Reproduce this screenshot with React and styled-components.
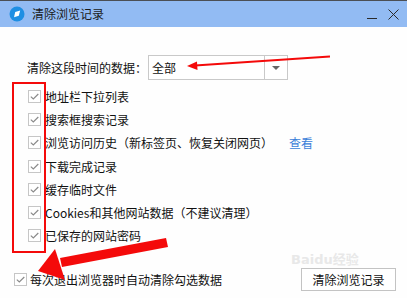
import styled, { createGlobalStyle } from "styled-components";

const GlobalStyle = createGlobalStyle`
  html, body {
    margin: 0;
    padding: 0;
    background: #fff;
  }
  body {
    font-family: "Noto Sans CJK SC", "DejaVu Sans", sans-serif;
    font-size: 12px;
    color: #111;
  }
`;

const Window = styled.div`
  position: relative;
  width: 407px;
  height: 298px;
  background: #fefefe;
  overflow: hidden;
`;

const TitleBar = styled.div`
  display: flex;
  align-items: center;
  height: 26px;
  border-top: 1px solid #4b4f55;
  background: #92bbf3;
  padding: 0 8px 0 9px;
`;

const Title = styled.div`
  flex: 1;
  margin-left: 7px;
  font-size: 12px;
  color: #1b1b1b;
  line-height: 26px;
`;

const WinButtons = styled.div`
  display: flex;
  align-items: center;
  gap: 10px;
`;

const Body = styled.div`
  display: flex;
  flex-direction: column;
`;

const RangeRow = styled.div`
  display: flex;
  align-items: center;
  height: 25px;
  margin-top: 28px;
  padding-left: 27px;
`;

const RangeLabel = styled.span`
  width: 121px;
  white-space: nowrap;
`;

const Select = styled.div`
  display: flex;
  width: 138px;
  height: 23px;
  border: 1px solid #c9c9c9;
  background: #fff;
`;

const SelectValue = styled.div`
  flex: 1;
  padding-left: 3px;
  line-height: 23px;
`;

const SelectArrow = styled.div`
  width: 22px;
  border-left: 1px solid #c9c9c9;
  display: flex;
  align-items: center;
  justify-content: center;
  &::after {
    content: "";
    border-left: 4px solid transparent;
    border-right: 4px solid transparent;
    border-top: 4px solid #666;
  }
`;

const List = styled.div`
  display: flex;
  flex-direction: column;
  margin-top: 5px;
  padding-left: 28px;
`;

const Row = styled.label`
  display: flex;
  align-items: center;
  height: 23.2px;
  white-space: nowrap;
`;

const Box = styled.span`
  display: inline-flex;
  align-items: center;
  justify-content: center;
  box-sizing: border-box;
  width: 13px;
  height: 13px;
  border: 1px solid #c6c6c6;
  background: #fff;
  margin-right: ${(p) => p.$gap || 4}px;
  flex: none;
`;

const Link = styled.span`
  color: #3b7fd9;
  margin-left: 16px;
`;

const Footer = styled.div`
  display: flex;
  align-items: center;
  justify-content: space-between;
  margin-top: 21px;
  padding: 0 11px 0 14px;
`;

const FooterCheck = styled.label`
  display: flex;
  align-items: center;
  white-space: nowrap;
`;

const Button = styled.div`
  width: 93px;
  height: 21px;
  border: 1px solid #c3c3c3;
  background: #fff;
  text-align: center;
  line-height: 21px;
  font-size: 12px;
`;

const Overlay = styled.svg`
  position: absolute;
  left: 0;
  top: 0;
  pointer-events: none;
`;

const Watermark = styled.div`
  position: absolute;
  left: 291px;
  top: 253px;
  color: #e8e8e8;
  font-family: "DejaVu Sans", "Noto Sans CJK SC", sans-serif;
  font-size: 13px;
  font-weight: bold;
  line-height: 13px;
  white-space: nowrap;
  pointer-events: none;
`;

const Check = () => (
  <svg width="9" height="7" viewBox="0 0 9 7">
    <path d="M0.8 3.6 L3.3 5.9 L8.3 1" fill="none" stroke="#8a8a8a" strokeWidth="1.2" />
  </svg>
);

const Logo = () => (
  <svg width="16" height="16" viewBox="0 0 16 16">
    <circle cx="8" cy="8" r="7.5" fill="#1f8fe3" />
    <path d="M5 11.2 L6.2 6 L11.2 4.6 L9.8 9.8 Z" fill="#fff" />
  </svg>
);

const items = [
  "地址栏下拉列表",
  "搜索框搜索记录",
  "浏览访问历史（新标签页、恢复关闭网页）",
  "下载完成记录",
  "缓存临时文件",
  "Cookies和其他网站数据（不建议清理）",
  "已保存的网站密码",
];

export default function App() {
  return (
    <Window>
      <GlobalStyle />
      <TitleBar>
        <Logo />
        <Title>清除浏览记录</Title>
        <WinButtons>
          <svg width="11" height="11" viewBox="0 0 11 11">
            <path d="M0 9.5 H10" stroke="#2a2a2a" strokeWidth="1" />
          </svg>
          <svg width="11" height="11" viewBox="0 0 11 11">
            <path d="M0.5 0.5 L10.5 10.5 M10.5 0.5 L0.5 10.5" stroke="#2a2a2a" strokeWidth="1" />
          </svg>
        </WinButtons>
      </TitleBar>
      <Body>
        <RangeRow>
          <RangeLabel>清除这段时间的数据：</RangeLabel>
          <Select>
            <SelectValue>全部</SelectValue>
            <SelectArrow />
          </Select>
        </RangeRow>
        <List>
          {items.map((t, i) => (
            <Row key={t}>
              <Box>
                <Check />
              </Box>
              {t}
              {i === 2 && <Link>查看</Link>}
            </Row>
          ))}
        </List>
        <Footer>
          <FooterCheck>
            <Box $gap={3}>
              <Check />
            </Box>
            每次退出浏览器时自动清除勾选数据
          </FooterCheck>
          <Button>清除浏览记录</Button>
        </Footer>
      </Body>
      <Watermark>Baidu经验</Watermark>
      <Overlay width="407" height="298" viewBox="0 0 407 298">
        <rect x="13" y="83" width="32" height="169" fill="none" stroke="#f40a0a" strokeWidth="2" />
        <path d="M330 56.5 L195 65.5" stroke="#f40a0a" strokeWidth="2" />
        <path d="M187 66 L197 61.5 L197.5 70 Z" fill="#f40a0a" />
        <path d="M166 238 L168 247 L62 267 L60 258 Z" fill="#f40a0a" />
        <path d="M38 271 L55 249 L65 280 Z" fill="#f40a0a" />
      </Overlay>
    </Window>
  );
}
